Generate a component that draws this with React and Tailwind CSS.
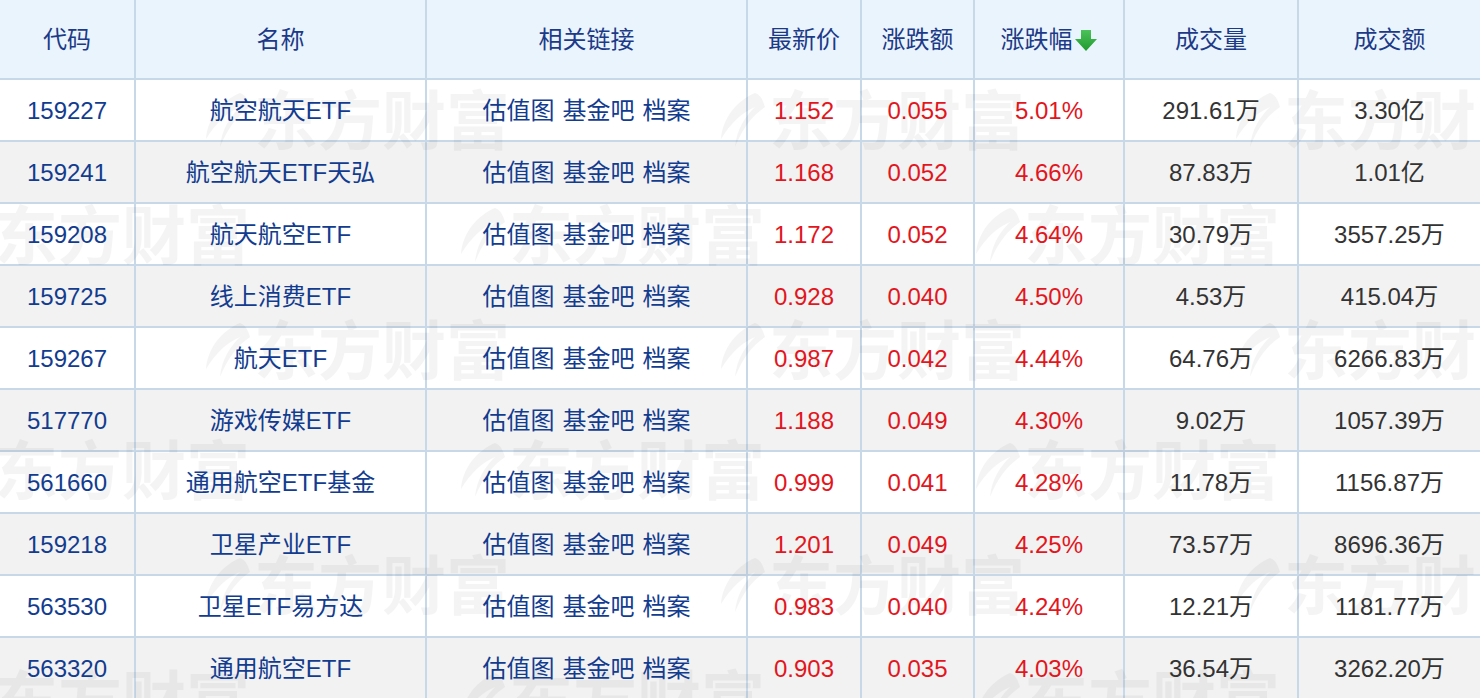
const rows = [
  ["159227", "航空航天ETF", "1.152", "0.055", "5.01%", "291.61万", "3.30亿"],
  ["159241", "航空航天ETF天弘", "1.168", "0.052", "4.66%", "87.83万", "1.01亿"],
  ["159208", "航天航空ETF", "1.172", "0.052", "4.64%", "30.79万", "3557.25万"],
  ["159725", "线上消费ETF", "0.928", "0.040", "4.50%", "4.53万", "415.04万"],
  ["159267", "航天ETF", "0.987", "0.042", "4.44%", "64.76万", "6266.83万"],
  ["517770", "游戏传媒ETF", "1.188", "0.049", "4.30%", "9.02万", "1057.39万"],
  ["561660", "通用航空ETF基金", "0.999", "0.041", "4.28%", "11.78万", "1156.87万"],
  ["159218", "卫星产业ETF", "1.201", "0.049", "4.25%", "73.57万", "8696.36万"],
  ["563530", "卫星ETF易方达", "0.983", "0.040", "4.24%", "12.21万", "1181.77万"],
  ["563320", "通用航空ETF", "0.903", "0.035", "4.03%", "36.54万", "3262.20万"],
];

const headers = ["代码", "名称", "相关链接", "最新价", "涨跌额", "涨跌幅", "成交量", "成交额"];

// watermark tiles: [left, top]
const marks = [
  [200, 90], [715, 90], [1230, 90],
  [-60, 205], [455, 205], [970, 205],
  [200, 320], [715, 320], [1230, 320],
  [-60, 440], [455, 440], [970, 440],
  [200, 555], [715, 555], [1230, 555],
  [-60, 670], [455, 670], [970, 670],
];

function SortDown() {
  return (
    <svg width="24" height="24" viewBox="0 0 24 24" className="ml-[1px]">
      <defs>
        <linearGradient id="g" x1="0" y1="0" x2="0" y2="1">
          <stop offset="0" stopColor="#4cc25a" />
          <stop offset="1" stopColor="#1f9a2e" />
        </linearGradient>
      </defs>
      <path d="M7 2h10v9h6l-11 12L1 11h6z" fill="url(#g)" />
    </svg>
  );
}

function Logo() {
  return (
    <svg width="52" height="62" viewBox="0 0 52 62">
      <path d="M40 2C22 10 8 26 6 48c10-16 20-26 34-32-10 10-18 22-20 40 8-20 18-32 30-40C48 10 46 4 40 2z" fill="currentColor" />
    </svg>
  );
}

function Watermark({ x, y }) {
  return (
    <div className="absolute flex items-center gap-[2px] whitespace-nowrap text-[64px] font-bold leading-none text-black opacity-[0.04]" style={{ left: x, top: y }}>
      <Logo />
      <span>东方财富</span>
    </div>
  );
}

export default function App() {
  return (
    <div className="w-[1480px] h-[698px] overflow-hidden bg-white text-[24px] font-['Liberation_Sans','Noto_Sans_CJK_SC',sans-serif]">
      <div className="relative">
        <div className="grid grid-cols-[134px_289px_319px_112px_111px_148px_172px_181px] grid-rows-[78px_repeat(10,60px)] gap-[2px] bg-[#c7d8e8]">
          {headers.map((h) => (
            <div key={h} className="flex items-center justify-center bg-[#eaf4fd] pt-[2px] text-[#1c3a87]">
              {h}
              {h === "涨跌幅" && <SortDown />}
            </div>
          ))}
          {rows.map((r, i) => {
            const bg = i % 2 ? "bg-[#f2f2f2]" : "bg-white";
            const cell = `flex items-center justify-center pt-[2px] ${bg}`;
            return [
              <div key={i + "a"} className={`${cell} text-[#123c8f]`}><span className="relative z-10">{r[0]}</span></div>,
              <div key={i + "b"} className={`${cell} text-[#123c8f]`}><span className="relative z-10">{r[1]}</span></div>,
              <div key={i + "c"} className={`${cell} gap-[8px] text-[#123c8f]`}>
                <a className="relative z-10">估值图</a>
                <a className="relative z-10">基金吧</a>
                <a className="relative z-10">档案</a>
              </div>,
              <div key={i + "d"} className={`${cell} text-[#e3151d]`}><span className="relative z-10">{r[2]}</span></div>,
              <div key={i + "e"} className={`${cell} text-[#e3151d]`}><span className="relative z-10">{r[3]}</span></div>,
              <div key={i + "f"} className={`${cell} text-[#e3151d]`}><span className="relative z-10">{r[4]}</span></div>,
              <div key={i + "g"} className={`${cell} text-[#333333]`}><span className="relative z-10">{r[5]}</span></div>,
              <div key={i + "h"} className={`${cell} text-[#333333]`}><span className="relative z-10">{r[6]}</span></div>,
            ];
          })}
        </div>
        <div className="pointer-events-none absolute left-0 right-0 top-[80px] bottom-0 overflow-hidden">
          {marks.map(([x, y], i) => (
            <Watermark key={i} x={x} y={y - 80} />
          ))}
        </div>
      </div>
    </div>
  );
}
